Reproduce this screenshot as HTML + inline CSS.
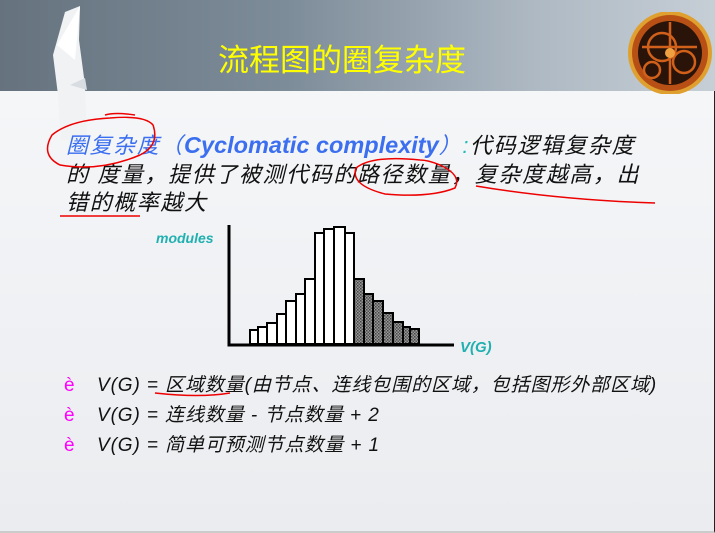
<!DOCTYPE html>
<html><head><meta charset="utf-8"><style>
body{margin:0;width:715px;height:533px;overflow:hidden;background:#eceef1;position:relative;font-family:"Liberation Sans","Noto Sans CJK SC",sans-serif}
.hdr{position:absolute;left:0;top:0;width:715px;height:91px;background:linear-gradient(90deg,#66737f 0%,#7d8c99 40%,#aeb9c3 75%,#c6ced6 100%)}
.body{position:absolute;left:0;top:91px;width:714px;height:440px;background:linear-gradient(180deg,#f5f6f8 0%,#eef0f3 60%,#eaecef 100%);border-right:1px solid #222;border-bottom:2px solid #ccc}
.t{position:absolute;left:218px;top:35px;color:#ffff00;font-size:31px;font-family:"Noto Sans CJK SC",sans-serif}
.p{position:absolute;left:66px;font-size:22px;letter-spacing:1.6px;font-style:italic;color:#111;white-space:nowrap}
.b{position:absolute;left:64px;font-size:19px;letter-spacing:0.9px;color:#111;white-space:nowrap;font-style:italic}
.b i.e{color:#f0f;font-style:normal;display:inline-block;width:33px}
</style></head><body>
<div class="hdr"></div>
<div class="body"></div>
<svg style="position:absolute;left:25px;top:0" width="70" height="140"><path d="M40 12 L55 6 L54 40 L60 85 L62 140 L36 140 L33 95 L28 55 Z" fill="#f0f2f4"/><path d="M32 45 L55 6 L50 60 Z" fill="#fff"/><path d="M45 85 L60 78 L62 90 Z" fill="#d8dde2"/></svg>
<svg style="position:absolute;left:622px;top:12px" width="93" height="82">
<circle cx="48" cy="41" r="42" fill="#e0a030"/>
<circle cx="48" cy="41" r="38" fill="#b85015"/>
<circle cx="48" cy="41" r="32" fill="#2a140a"/>
<g fill="none" stroke="#d0601a" stroke-width="2.5"><circle cx="40" cy="35" r="14"/><circle cx="62" cy="50" r="11"/><circle cx="30" cy="58" r="8"/><path d="M20 35 L75 35 M48 10 L48 72"/></g>
<circle cx="48" cy="41" r="5" fill="#f0a040"/>
</svg>
<div class="t">流程图的圈复杂度</div>
<div class="p" style="top:128px"><span style="color:#3b6ff0">圈复杂度（<b style="font-size:23.5px;letter-spacing:0">Cyclomatic complexity</b>）</span><span style="color:#2bb">:</span>代码逻辑复杂度</div>
<div class="p" style="top:157px">的 度量，提供了被测代码的路径数量，复杂度越高，出</div>
<div class="p" style="top:185px">错的概率越大</div>
<svg style="position:absolute;left:0;top:0" width="715" height="533">
<g fill="none" stroke="#e00" stroke-width="1.5">
<path d="M110 118 Q70 120 52 135 Q40 155 60 165 Q100 172 140 155 Q160 145 153 125 Q145 115 110 118"/>
<path d="M105 115 Q115 112 135 115"/>
<path d="M420 160 Q372 155 356 168 Q350 185 385 194 Q430 198 455 188 Q462 175 440 165 Q428 160 420 160"/>
<path d="M476 186 Q560 200 655 203"/>
<path d="M60 216 L140 216"/>
<path d="M155 393 Q200 398 230 393"/>
</g>
<defs><pattern id="h" width="3" height="3" patternUnits="userSpaceOnUse"><rect width="3" height="3" fill="#999"/><rect width="1.5" height="1.5" fill="#444"/><rect x="1.5" y="1.5" width="1.5" height="1.5" fill="#555"/></pattern></defs>
<text x="156" y="243" fill="#20b0b0" font-size="14" font-weight="bold" font-style="italic" font-family="Liberation Sans">modules</text>
<text x="460" y="352" fill="#20b0b0" font-size="15" font-weight="bold" font-style="italic" font-family="Liberation Sans">V(G)</text>
<g stroke="#000" stroke-width="2">
<rect x="250" y="330" width="8" height="14" fill="#fff"/>
<rect x="258" y="327" width="9" height="17" fill="#fff"/>
<rect x="267" y="323" width="10" height="21" fill="#fff"/>
<rect x="277" y="314" width="9" height="30" fill="#fff"/>
<rect x="286" y="301" width="10" height="43" fill="#fff"/>
<rect x="296" y="294" width="9" height="50" fill="#fff"/>
<rect x="305" y="279" width="10" height="65" fill="#fff"/>
<rect x="315" y="233" width="9" height="111" fill="#fff"/>
<rect x="324" y="229" width="10" height="115" fill="#fff"/>
<rect x="334" y="227" width="11" height="117" fill="#fff"/>
<rect x="345" y="233" width="9" height="111" fill="#fff"/>
<rect x="354" y="279" width="10" height="65" fill="url(#h)"/>
<rect x="364" y="294" width="9" height="50" fill="url(#h)"/>
<rect x="373" y="301" width="10" height="43" fill="url(#h)"/>
<rect x="383" y="313" width="10" height="31" fill="url(#h)"/>
<rect x="393" y="322" width="10" height="22" fill="url(#h)"/>
<rect x="403" y="327" width="7" height="17" fill="url(#h)"/>
<rect x="410" y="329" width="9" height="15" fill="url(#h)"/>
</g>
<path d="M229 225 L229 345 L454 345" fill="none" stroke="#000" stroke-width="3"/>
</svg>
<div class="b" style="top:370px"><i class="e">è</i>V(G) = 区域数量(由节点、连线包围的区域，包括图形外部区域)</div>
<div class="b" style="top:400px"><i class="e">è</i>V(G) = 连线数量 - 节点数量 + 2</div>
<div class="b" style="top:430px"><i class="e">è</i>V(G) = 简单可预测节点数量 + 1</div>
</body></html>
